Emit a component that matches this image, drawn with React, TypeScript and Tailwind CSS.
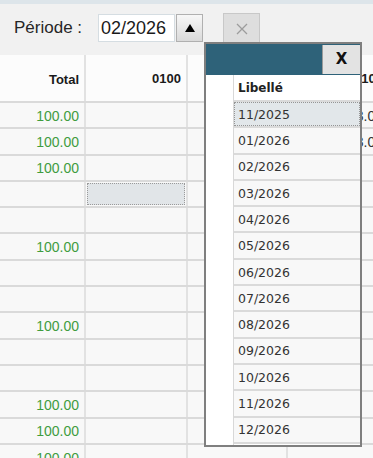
import React from "react";

const rows: { total: string; c4: string }[] = [
  { total: "100.00", c4: "3.00" },
  { total: "100.00", c4: "3.00" },
  { total: "100.00", c4: "" },
  { total: "", c4: "" },
  { total: "", c4: "" },
  { total: "100.00", c4: "" },
  { total: "", c4: "" },
  { total: "", c4: "" },
  { total: "100.00", c4: "" },
  { total: "", c4: "" },
  { total: "", c4: "" },
  { total: "100.00", c4: "" },
  { total: "100.00", c4: "" },
  { total: "100.00", c4: "" },
];

const items = [
  "11/2025",
  "01/2026",
  "02/2026",
  "03/2026",
  "04/2026",
  "05/2026",
  "06/2026",
  "07/2026",
  "08/2026",
  "09/2026",
  "10/2026",
  "11/2026",
  "12/2026",
];

export default function App() {
  return (
    <div className="relative w-[373px] h-[458px] overflow-hidden bg-[#f1f1f1] font-['Liberation_Sans',Arial,sans-serif]">
      <div className="h-[4px] bg-[#dde5ea]" />
      {/* toolbar */}
      <div className="flex items-start h-[51px] pl-[14px] pt-[10px]">
        <div className="w-[84px] h-[28px] flex items-center text-[17px] text-[#262626]">
          Période :
        </div>
        <div className="w-[77px] h-[28px] bg-white border border-[#d5dde2] flex items-center pl-[2px] text-[18px] text-[#1a1a1a]">
          02/2026
        </div>
        <button className="ml-[1px] w-[27px] h-[28px] border border-[#b0b0b0] bg-gradient-to-b from-[#f7f7f7] to-[#dadada] flex items-center justify-center">
          <svg width="10" height="8" viewBox="0 0 10 8">
            <polygon points="5,0 10,8 0,8" fill="#000" />
          </svg>
        </button>
        <button className="ml-[20px] -mt-[1px] w-[37px] h-[32px] border border-[#c8c8c8] bg-[#dedede] flex items-center justify-center">
          <svg width="12" height="12" viewBox="0 0 12 12">
            <path d="M1 1 L11 11 M11 1 L1 11" stroke="#9c9c9c" strokeWidth="1.3" />
          </svg>
        </button>
      </div>
      {/* table */}
      <div className="flex flex-col w-[420px]">
        <div className="flex h-[48px] bg-[#fcfcfc] border-b-2 border-[#dadada]">
          <div className="w-[86px] shrink-0 border-r-2 border-[#e2e2e2] flex items-center justify-end pr-[5px] pt-[3px] text-[13px] font-bold text-[#1a1a1a]">
            Total
          </div>
          <div className="w-[102px] shrink-0 border-r-2 border-[#e2e2e2] flex items-center justify-end pr-[5px] pt-[1px] text-[13px] font-bold text-[#1a1a1a]">
            0100
          </div>
          <div className="w-[100px] shrink-0 border-r-2 border-[#e2e2e2]" />
          <div className="w-[102px] shrink-0 border-r-2 border-[#e2e2e2] flex items-center justify-end pr-[5px] pt-[1px] text-[13px] font-bold text-[#1a1a1a]">
            0101
          </div>
        </div>
        {rows.map((r, i) => (
          <div key={i} className="flex h-[26.3px] bg-[#f8f8f8] border-b-2 border-[#dadada]">
            <div className="w-[86px] shrink-0 border-r-2 border-[#e2e2e2] flex items-center justify-end pr-[5px] pt-[2px] text-[14px] text-[#3f9c3f]">
              {r.total}
            </div>
            <div className="w-[102px] shrink-0 border-r-2 border-[#e2e2e2] flex items-stretch p-[1px]">
              {i === 3 && (
                <div className="flex-1 bg-[#e1e5e8] border border-dotted border-[#9a9a9a]" />
              )}
            </div>
            <div className="w-[100px] shrink-0 border-r-2 border-[#e2e2e2]" />
            <div className="w-[102px] shrink-0 border-r-2 border-[#e2e2e2] flex items-center justify-end pr-[5px] pt-[2px] text-[14px] text-[#333]">
              {r.c4}
            </div>
          </div>
        ))}
      </div>
      {/* popup */}
      <div className="absolute left-[204px] top-[42px] w-[158px] h-[405px] border-2 border-[#7f7f7f] bg-white flex flex-col font-['DejaVu_Sans',sans-serif]">
        <div className="flex h-[31px] bg-[#2e6279] shrink-0">
          <div className="flex-1" />
          <div className="w-[38px] mt-[1px] h-[29px] bg-[#e3e3e3] border-l border-[#9a9a9a] flex items-center justify-center text-[15px] font-bold text-[#111]">
            X
          </div>
        </div>
        <div className="flex flex-1">
          <div className="w-[28px] shrink-0 bg-white border-r border-[#d8d8d8]" />
          <div className="flex-1 flex flex-col">
            <div className="h-[27px] shrink-0 bg-white border-b-2 border-[#dadada] flex items-center pl-[4px] pt-[1px] text-[12px] font-bold text-[#222]">
              Libellé
            </div>
            {items.map((it, i) => (
              <div
                key={i}
                className="h-[26.3px] shrink-0 bg-[#f8f8f8] border-b-2 border-[#dadada] flex items-stretch"
              >
                <div
                  className={
                    i === 0
                      ? "flex-1 flex items-center pl-[3px] pt-[2px] bg-[#e2e7ea] border border-dotted border-[#959595] text-[12.5px] text-[#333]"
                      : "flex-1 flex items-center pl-[4px] pt-[2px] text-[12.5px] text-[#333]"
                  }
                >
                  {it}
                </div>
              </div>
            ))}
          </div>
        </div>
      </div>
    </div>
  );
}
